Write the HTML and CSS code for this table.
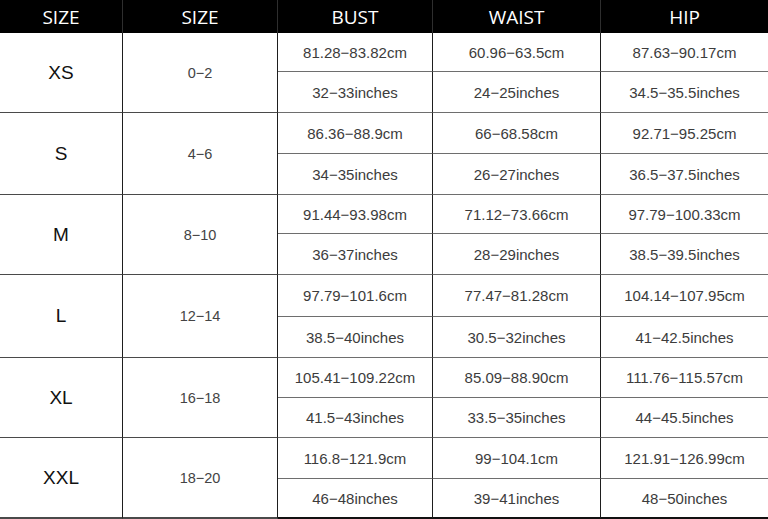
FILE: index.html
```html
<!DOCTYPE html>
<html lang="en">
<head>
<meta charset="utf-8">
<title>Size Chart</title>
<link rel="stylesheet" href="styles.css">
</head>
<body>
<div class="chart">
  <div class="hd">SIZE</div>
  <div class="hd">SIZE</div>
  <div class="hd">BUST</div>
  <div class="hd">WAIST</div>
  <div class="hd last">HIP</div>

  <div class="sz">XS</div><div class="num">0−2</div>
  <div class="m">81.28−83.82cm</div><div class="m">60.96−63.5cm</div><div class="m last">87.63−90.17cm</div>
  <div class="m">32−33inches</div><div class="m">24−25inches</div><div class="m last">34.5−35.5inches</div>

  <div class="sz">S</div><div class="num">4−6</div>
  <div class="m">86.36−88.9cm</div><div class="m">66−68.58cm</div><div class="m last">92.71−95.25cm</div>
  <div class="m">34−35inches</div><div class="m">26−27inches</div><div class="m last">36.5−37.5inches</div>

  <div class="sz">M</div><div class="num">8−10</div>
  <div class="m">91.44−93.98cm</div><div class="m">71.12−73.66cm</div><div class="m last">97.79−100.33cm</div>
  <div class="m">36−37inches</div><div class="m">28−29inches</div><div class="m last">38.5−39.5inches</div>

  <div class="sz">L</div><div class="num">12−14</div>
  <div class="m">97.79−101.6cm</div><div class="m">77.47−81.28cm</div><div class="m last">104.14−107.95cm</div>
  <div class="m">38.5−40inches</div><div class="m">30.5−32inches</div><div class="m last">41−42.5inches</div>

  <div class="sz">XL</div><div class="num">16−18</div>
  <div class="m">105.41−109.22cm</div><div class="m">85.09−88.90cm</div><div class="m last">111.76−115.57cm</div>
  <div class="m">41.5−43inches</div><div class="m">33.5−35inches</div><div class="m last">44−45.5inches</div>

  <div class="sz end">XXL</div><div class="num end">18−20</div>
  <div class="m">116.8−121.9cm</div><div class="m">99−104.1cm</div><div class="m last">121.91−126.99cm</div>
  <div class="m end">46−48inches</div><div class="m end">39−41inches</div><div class="m last end">48−50inches</div>
</div>
</body>
</html>
```

FILE: styles.css
```css
html, body {
  margin: 0;
  padding: 0;
  background: #ffffff;
}

.chart {
  width: 768px;
  height: 519px;
  display: grid;
  grid-template-columns: 123px 155px 155px 168px 167px;
  grid-template-rows: 33px 39px 41px 41px 41px 39px 41px 42px 41px 40px 40px 41px 40px;
  font-family: "Liberation Sans", Arial, sans-serif;
  overflow: hidden;
}

.chart > div {
  display: flex;
  align-items: center;
  justify-content: center;
  box-sizing: border-box;
  border-right: 1px solid #1e1e1e;
  border-bottom: 1px solid #6e6e6e;
  white-space: nowrap;
}

.chart > div.last {
  border-right: none;
}

.hd {
  background: #000;
  color: #fff;
  font-family: "Open Sans", "Noto Sans", sans-serif;
  font-size: 19px;
  border-right-color: #2e2e2e !important;
  border-bottom: none !important;
  padding-top: 1px;
}

.sz {
  grid-row: span 2;
  font-size: 19px;
  color: #111;
  border-bottom-color: #4a4a4a !important;
}

.num {
  grid-row: span 2;
  font-size: 14.5px;
  color: #444;
  border-bottom-color: #4a4a4a !important;
}

.m {
  font-size: 15px;
  color: #3c3c3c;
}

.chart > div.end {
  border-bottom: 2px solid #111;
}
```
